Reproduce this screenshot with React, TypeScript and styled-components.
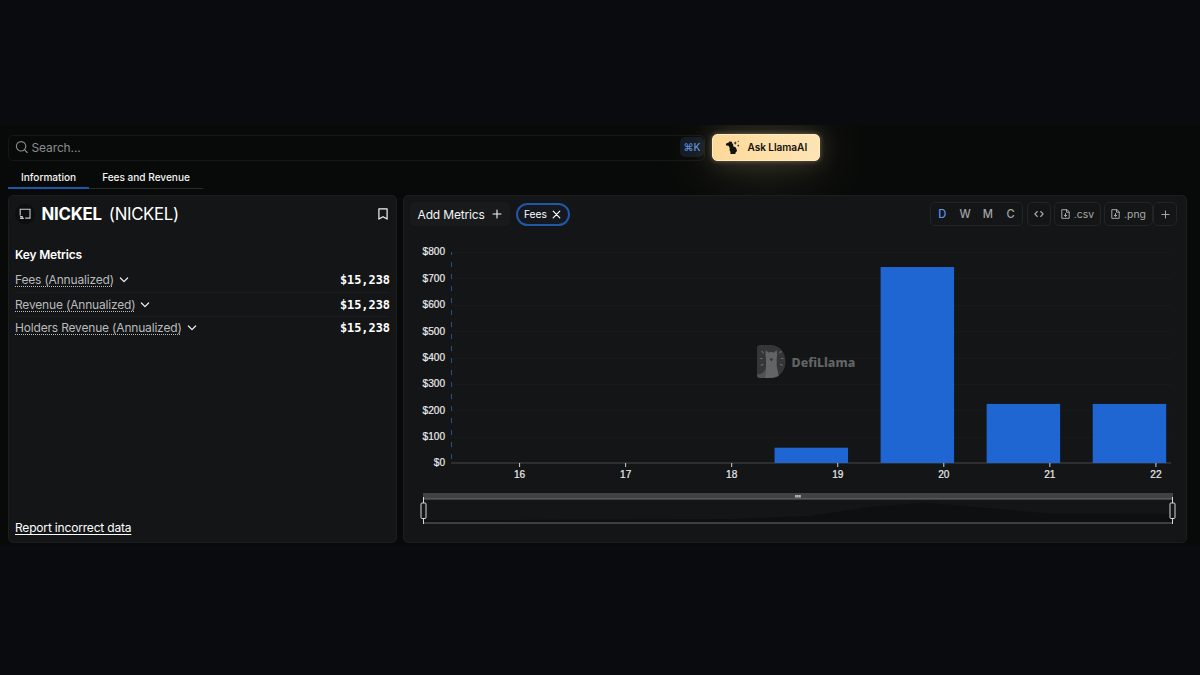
import React from "react";
import styled, { createGlobalStyle, css } from "styled-components";

const GlobalStyle = createGlobalStyle`
  *, *::before, *::after { box-sizing: border-box; }
  html, body { margin: 0; padding: 0; background: #090b0e; }
  body { font-family: Inter, "Liberation Sans", sans-serif; color: #fff; overflow: hidden; }
`;

const Screen = styled.div`
  width: 1200px;
  height: 675px;
  padding-top: 125px;
  background: #090b0e;
`;

const Page = styled.main`
  height: 420px;
  overflow: hidden;
  padding: 9px 12px 0 8px;
  background: #080a09;
  display: flex;
  flex-direction: column;
`;

const TopBar = styled.header`
  display: flex;
  gap: 8px;
  height: 27px;
`;

const SearchBox = styled.div`
  display: flex;
  align-items: center;
  width: 697px;
  height: 26px;
  margin-top: 1px;
  padding: 0 0 2px 6px;
  border: 1px solid #151718;
  border-radius: 5px;
  color: #8b8d8f;
  font-size: 12px;
  letter-spacing: -0.12px;
`;

const SearchLabel = styled.span`
  flex: 1;
  margin-left: 2.5px;
`;

const Shortcut = styled.kbd`
  display: flex;
  align-items: center;
  justify-content: center;
  width: 24px;
  height: 20px;
  border-radius: 5px;
  background: #131a24;
  color: #5c8fdf;
  font: 500 10.2px Inter, "DejaVu Sans", sans-serif;
`;

const AskButton = styled.button`
  display: flex;
  align-items: center;
  width: 108px;
  height: 27px;
  margin-left: -1px;
  padding: 0 0 1px 12.5px;
  gap: 8px;
  border: 1px solid #ffe9bd;
  border-radius: 5px;
  background: linear-gradient(100deg, #fdd897 0%, #fde0a9 50%, #fee3b5 100%);
  box-shadow: 0 0 5px rgba(253, 224, 169, 0.35), 0 0 24px rgba(253, 224, 169, 0.16), 0 4px 60px rgba(253, 224, 169, 0.26);
  color: #13110d;
  font: 600 10.1px Inter, sans-serif;
  letter-spacing: -0.06px;
  white-space: nowrap;
`;

const Tabs = styled.nav`
  display: flex;
  width: 195px;
  height: 23px;
  margin-top: 5px;
`;

const Tab = styled.span<{ $active?: boolean }>`
  padding: 5px 13px 0;
  border-bottom: ${(p) => (p.$active ? "2px solid #1d57a6" : "1px solid #292b2c")};
  font-size: 10.1px;
  line-height: 13px;
  font-weight: 500;
  letter-spacing: -0.02px;
  color: #f2f3f3;
  white-space: nowrap;
`;

const Panels = styled.div`
  display: grid;
  grid-template-columns: 389px 784px;
  gap: 6px;
  margin-top: 6px;
  height: 348px;
`;

const Panel = styled.section`
  border: 1px solid #1b1d1e;
  border-radius: 5px;
  background: #131516;
`;

const InfoPanel = styled(Panel)`
  display: flex;
  flex-direction: column;
  padding: 7px 6px 6px;
`;

const TitleRow = styled.div`
  display: flex;
  align-items: center;
  height: 22px;
  padding-right: 2px;
`;

const TokenBadge = styled.span`
  display: flex;
  align-items: center;
  justify-content: center;
  width: 20px;
  height: 20px;
  border-radius: 50%;
  background: #0c0e0f;
`;

const Title = styled.h1`
  flex: 1;
  margin: 0 0 0 6.5px;
  font-size: 16.8px;
  line-height: 22px;
  font-weight: 700;
  letter-spacing: -0.22px;
`;

const Symbol = styled.span`
  margin-left: 7px;
  font-weight: 400;
  letter-spacing: -0.32px;
`;

const SectionTitle = styled.h2`
  margin: 20.5px 0 5px;
  font-size: 12px;
  line-height: 18px;
  font-weight: 600;
  letter-spacing: -0.18px;
`;

const MetricRow = styled.div`
  display: flex;
  align-items: center;
  height: 23.7px;
  & + & { border-top: 1px solid #1a1c1d; }
`;

const MetricName = styled.span`
  font-size: 12px;
  line-height: 16px;
  letter-spacing: -0.18px;
  color: #b9bbbc;
  text-decoration: underline dotted 1px;
  text-underline-offset: 2px;
  text-decoration-skip-ink: none;
  margin-right: 5px;
`;

const MetricValue = styled.span`
  margin-left: auto;
  font: bold 11.9px "DejaVu Sans Mono", monospace;
`;

const ReportLink = styled.a`
  margin-top: auto;
  font-size: 12px;
  line-height: 16px;
  letter-spacing: -0.18px;
  text-decoration: underline;
  text-underline-offset: 1.5px;
`;

const ChartPanel = styled(Panel)`
  padding: 6px 6px 0 6px;
`;

const Toolbar = styled.div`
  display: flex;
  align-items: center;
  height: 24px;
  padding-right: 3px;
`;

const AddMetrics = styled.button`
  display: flex;
  align-items: center;
  justify-content: space-between;
  width: 100px;
  height: 24px;
  padding: 0 8px 0 7.5px;
  border: 0;
  border-radius: 5px;
  background: #181a1b;
  color: #f5f5f5;
  font: 400 12px Inter, sans-serif;
  letter-spacing: -0.15px;
`;

const Chip = styled.button`
  display: flex;
  align-items: center;
  justify-content: space-between;
  width: 54px;
  height: 23px;
  margin-left: 6px;
  padding: 0 7.5px 0 6px;
  border: 2px solid #2057a8;
  border-radius: 12px;
  background: #15191f;
  color: #fff;
  font: 400 10.2px Inter, sans-serif;
`;

const Actions = styled.div`
  display: flex;
  margin-left: auto;
`;

const outlined = css`
  display: flex;
  align-items: center;
  justify-content: center;
  height: 24px;
  border: 1px solid #222425;
  border-radius: 5px;
`;

const Intervals = styled.div`
  ${outlined}
  width: 93px;
  margin-right: 4px;
`;

const Interval = styled.span<{ $active?: boolean }>`
  width: 23.6px;
  text-align: center;
  font-size: 11.2px;
  font-weight: 500;
  color: ${(p) => (p.$active ? "#5b96f3" : "#a0a2a3")};
`;

const ActionButton = styled.button<{ $width: number; $gap?: number }>`
  ${outlined}
  width: ${(p) => p.$width}px;
  margin-right: ${(p) => p.$gap ?? 0}px;
  padding: 0;
  gap: 4px;
  background: transparent;
  color: #a6a8a9;
  font: 400 10.4px Inter, sans-serif;
`;

const Plot = styled.svg`
  display: block;
  margin-top: 9px;
`;

const SearchIcon = () => (
  <svg width="14" height="14" viewBox="0 0 14 14" fill="none" stroke="#8b8d8f" strokeWidth="1.1" strokeLinecap="round">
    <circle cx="6.1" cy="6.3" r="4.7" />
    <path d="m9.6 9.8 2.6 2.7" />
  </svg>
);

const LlamaIcon = () => (
  <svg width="14" height="15" viewBox="0 0 14 15" fill="#13110d">
    <path d="M3.2 2.2 3.8.7l.9 1.3 1.1-.5.4 1.7 1 1.2.1 2c1.900.1 3 1.200 3.200 2.800l.6 1.700-1.200 1.100-.7 1.900-4.800.2.1-2-1-2 .2-2.200-1.200-2.100-2.300-.2-.3-1.700 1.500-.9z" />
    <path d="m9.200 1.300.5 1.300 1.300.5-1.300.5-.5 1.300-.5-1.300-1.300-.5 1.300-.5zM12.200 4.300l.4 1 .9.300-.9.400-.4.900-.4-.9-.9-.4.9-.3zM12.100.3l.3.700.7.2-.7.300-.3.7-.2-.7-.7-.3.7-.2z" />
  </svg>
);

const TokenIcon = () => (
  <svg width="12" height="12" viewBox="0 0 12 12" fill="none" stroke="#c8cacb" strokeWidth="1.1">
    <path d="M1.200 7.500V1.200h9.800v8.900H6.200" />
    <path d="M1 8.700h2.500M1 10.300h3.800M3.400 8.500v1.800" strokeWidth="1.2" />
  </svg>
);

const BookmarkIcon = () => (
  <svg width="10" height="12" viewBox="0 0 10 12" fill="none" stroke="#f4f4f4" strokeWidth="1.2" strokeLinejoin="round">
    <path d="M.9.8h8.200v10.300L5 8.700.9 11.100z" />
  </svg>
);

const Chevron = () => (
  <svg width="10" height="6" viewBox="0 0 10 6" fill="none" stroke="#f1f1f1" strokeWidth="1.2" strokeLinecap="round" strokeLinejoin="round">
    <path d="m1.400 1 3.600 3.600L8.600 1" />
  </svg>
);

const PlusIcon = ({ size = 10 }: { size?: number }) => (
  <svg width={size} height={size} viewBox="0 0 10 10" fill="none" stroke="currentColor" strokeWidth="1.1" strokeLinecap="round">
    <path d="M5 1v8M1 5h8" />
  </svg>
);

const CloseIcon = () => (
  <svg width="9" height="9" viewBox="0 0 9 9" fill="none" stroke="currentColor" strokeWidth="1.2" strokeLinecap="round">
    <path d="m1.200 1.200 6.600 6.600m0-6.600L1.200 7.800" />
  </svg>
);

const CodeIcon = () => (
  <svg width="10" height="8" viewBox="0 0 10 8" fill="none" stroke="currentColor" strokeWidth="1.1" strokeLinecap="round" strokeLinejoin="round">
    <path d="M3.300 1.500.9 4l2.400 2.500M6.700 1.500 9.100 4 6.700 6.500" />
  </svg>
);

const FileIcon = () => (
  <svg width="9" height="10" viewBox="0 0 9 10" fill="none" stroke="currentColor" strokeWidth="1" strokeLinecap="round" strokeLinejoin="round">
    <path d="M5.500.7H.8v8.600h7.400V3.200zM5.500.7v2.500h2.700M4.500 4.500v3M3.200 6.200l1.300 1.300 1.300-1.300" />
  </svg>
);

const metrics = [
  { name: "Fees (Annualized)", value: "$15,238" },
  { name: "Revenue (Annualized)", value: "$15,238" },
  { name: "Holders Revenue (Annualized)", value: "$15,238" },
];

const yTicks = [800, 700, 600, 500, 400, 300, 200, 100, 0];
const xTicks = [16, 17, 18, 19, 20, 21, 22];
const bars = [
  { day: 19, fees: 58 },
  { day: 20, fees: 743 },
  { day: 21, fees: 224 },
  { day: 22, fees: 224 },
];

const left = 41;
const right = 761;
const base = 228;
const yAt = (v: number) => base - (v / 800) * 211;
const xAt = (day: number) => 109.6 + (day - 16) * 106.05;

const Watermark = () => (
  <g transform="translate(347 110)">
    <path d="M3 0h10c9.500 0 15.500 7 15.500 16.500S22.500 33 13 33H3q-3 0-3-3V3q0-3 3-3z" fill="#343637" />
    <path d="M0 29.500q7-.5 8.500-5.500v9H3q-3 0-3-3z" fill="#505253" />
    <path d="M8 33 9 21v-7.500Q7.700 9.500 9 5l2.300 2.500q3-.8 6 0L19.500 5q1.400 4.500.2 8.500V21l2 10q-3.700 2-8.700 2z" fill="#626465" />
    <path d="m12.500 13.500 1.900 3 1.900-3z" fill="#303233" />
    <g stroke="#66686a" strokeWidth="1.1" strokeLinecap="round">
      <path d="m5 6.500 1.300 1.300M3.200 13.500h2M4.200 20.300l1.600-.9M22.700 7.800 24 6.500M24.200 13.500h2M23.500 19.400l1.600.9" />
    </g>
    <text x="34.6" y="21.5" fill="#626465" fontFamily="'Noto Sans', sans-serif" fontWeight="800" fontSize="12.4">DefiLlama</text>
  </g>
);

const Handle = ({ x }: { x: number }) => (
  <g stroke="#d6d7d8" strokeWidth="1">
    <path d={`M${x} 262v27`} />
    <rect x={x - 2.5} y="268" width="5" height="15.5" rx="1" fill="#131516" />
  </g>
);

const FeesChart = () => (
  <Plot width="772" height="300" viewBox="0 0 772 300">
    <g fontFamily="'Liberation Sans', Arial, sans-serif" fontSize="10.1" fill="#e9eaea" stroke="#e9eaea" strokeWidth="0.2">
      {yTicks.map((v) => (
        <text key={v} x="35" y={yAt(v) + 3.4} textAnchor="end">${v}</text>
      ))}
      {xTicks.map((d) => (
        <text key={d} x={xAt(d)} y="243.3" textAnchor="middle">{d}</text>
      ))}
    </g>
    {yTicks.slice(0, -1).map((v) => (
      <path key={v} d={`M${left} ${Math.round(yAt(v)) + 0.5}H${right}`} stroke="#17191a" />
    ))}
    <path d={`M${left + 0.5} 17V${base}`} stroke="#214f94" strokeDasharray="5 7" strokeDashoffset="2" />
    <path d={`M${left} ${base}H${right}`} stroke="#48494b" strokeWidth="1" />
    <Watermark />
    {bars.map((b) => (
      <rect key={b.day} x={xAt(b.day) - 63.2} y={yAt(b.fees)} width="73.5" height={base - yAt(b.fees)} fill="#2066d2" />
    ))}
    {xTicks.map((d) => (
      <path key={d} d={`M${xAt(d)} ${base}v4`} stroke="#cfd0d1" />
    ))}
    <rect x="13" y="258" width="750" height="6" fill="#414244" />
    <path d="M13 264H763" stroke="#6b6c6e" />
    <path d="M13.5 285.5 325 284 400 281 460 272 515 267.5 638 278.5 762 279V288H13.5z" fill="#0d0f10" />
    <path d="M13 288H763" stroke="#6b6c6e" />
    <g fill="#c9cacb">
      <rect x="385.2" y="260" width="1.5" height="2.5" />
      <rect x="387.2" y="260" width="1.5" height="2.5" />
      <rect x="389.2" y="260" width="1.5" height="2.5" />
    </g>
    <Handle x={13.5} />
    <Handle x={762.5} />
  </Plot>
);

export default function App() {
  return (
    <Screen>
      <GlobalStyle />
      <Page>
        <TopBar>
          <SearchBox>
            <SearchIcon />
            <SearchLabel>Search...</SearchLabel>
            <Shortcut>⌘K</Shortcut>
          </SearchBox>
          <AskButton>
            <LlamaIcon />
            Ask LlamaAI
          </AskButton>
        </TopBar>
        <Tabs>
          <Tab $active>Information</Tab>
          <Tab>Fees and Revenue</Tab>
        </Tabs>
        <Panels>
          <InfoPanel>
            <TitleRow>
              <TokenBadge><TokenIcon /></TokenBadge>
              <Title>NICKEL<Symbol>(NICKEL)</Symbol></Title>
              <BookmarkIcon />
            </TitleRow>
            <SectionTitle>Key Metrics</SectionTitle>
            {metrics.map((m) => (
              <MetricRow key={m.name}>
                <MetricName>{m.name}</MetricName>
                <Chevron />
                <MetricValue>{m.value}</MetricValue>
              </MetricRow>
            ))}
            <ReportLink>Report incorrect data</ReportLink>
          </InfoPanel>
          <ChartPanel>
            <Toolbar>
              <AddMetrics>Add Metrics <PlusIcon /></AddMetrics>
              <Chip>Fees <CloseIcon /></Chip>
              <Actions>
                <Intervals>
                  <Interval $active>D</Interval>
                  <Interval>W</Interval>
                  <Interval>M</Interval>
                  <Interval>C</Interval>
                </Intervals>
                <ActionButton $width={24} $gap={3}><CodeIcon /></ActionButton>
                <ActionButton $width={47} $gap={3}><FileIcon />.csv</ActionButton>
                <ActionButton $width={49}><FileIcon />.png</ActionButton>
                <ActionButton $width={24}><PlusIcon size={9} /></ActionButton>
              </Actions>
            </Toolbar>
            <FeesChart />
          </ChartPanel>
        </Panels>
      </Page>
    </Screen>
  );
}
